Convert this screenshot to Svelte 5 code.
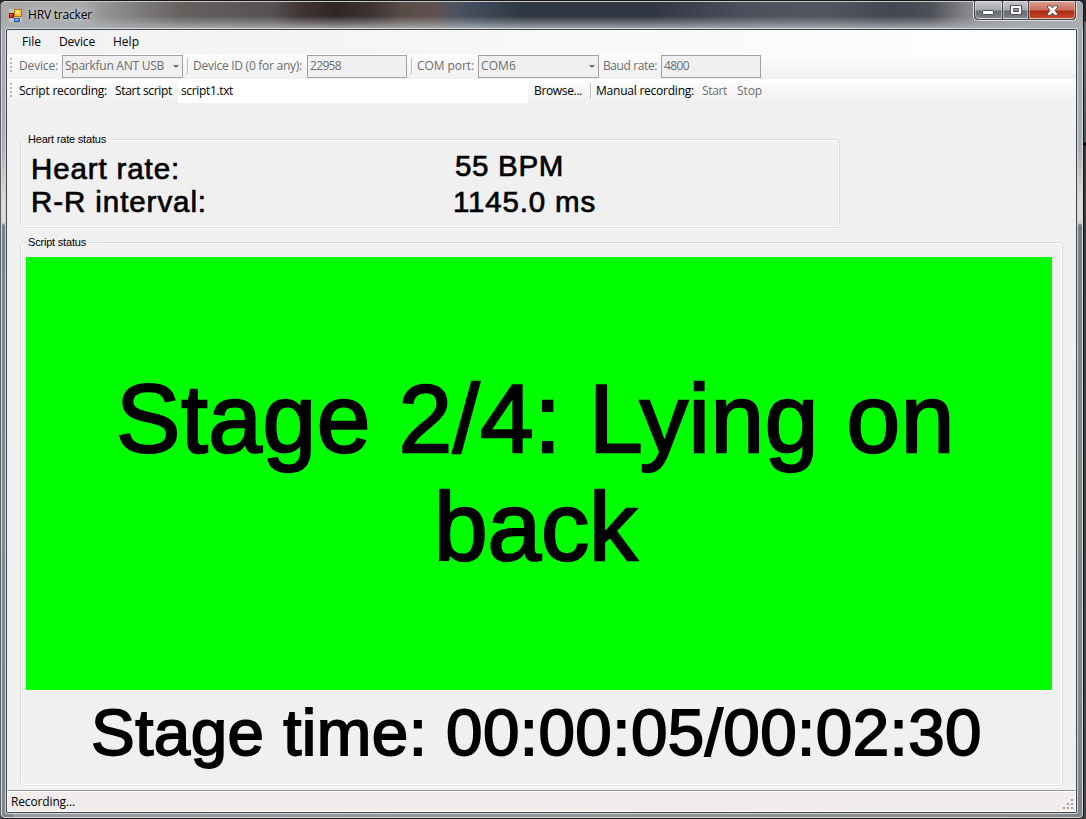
<script>
  // Tightens or loosens the tracking so that a label fills its column.
  function fit(node, width) {
    node.style.letterSpacing = '0px';
    const natural = node.getBoundingClientRect().width;
    node.style.letterSpacing = (width - natural) / node.textContent.length + 'px';
  }

  const menus = [
    { text: 'File', gap: 14, width: 19 },
    { text: 'Device', gap: 18, width: 36 },
    { text: 'Help', gap: 18, width: 26 }
  ];

  const deviceBar = [
    { kind: 'label', text: 'Device:', gap: 6, width: 39 },
    { kind: 'combo', text: 'Sparkfun ANT USB', gap: 4, width: 99, box: 121 },
    { kind: 'sep', gap: 4 },
    { kind: 'label', text: 'Device ID (0 for any):', gap: 4, width: 109 },
    { kind: 'input', text: '22958', gap: 5, width: 31, box: 100 },
    { kind: 'sep', gap: 4 },
    { kind: 'label', text: 'COM port:', gap: 4, width: 57 },
    { kind: 'combo', text: 'COM6', gap: 4, width: 35, box: 121 },
    { kind: 'label', text: 'Baud rate:', gap: 4, width: 54 },
    { kind: 'input', text: '4800', gap: 4, width: 25, box: 100 }
  ];

  const scriptBar = [
    { kind: 'label', text: 'Script recording:', gap: 6, width: 88 },
    { kind: 'label', text: 'Start script', gap: 8, width: 57 },
    { kind: 'plain', text: 'script1.txt', gap: 6, width: 52, box: 350 },
    { kind: 'label', text: 'Browse...', gap: 6, width: 48 },
    { kind: 'sep', gap: 8 },
    { kind: 'label', text: 'Manual recording:', gap: 4, width: 98 },
    { kind: 'label', text: 'Start', gap: 8, width: 25, off: true },
    { kind: 'label', text: 'Stop', gap: 10, width: 25, off: true }
  ];
</script>

{#snippet items(list)}
  <svg class="grip" width="2" height="16" viewBox="0 0 2 16">
    {#each [0, 4, 8, 12] as y}<rect x="0" {y} width="2" height="2" />{/each}
  </svg>
  {#each list as item}
    {#if item.kind === 'sep'}
      <i class="sep" style="margin-left:{item.gap}px"></i>
    {:else if item.kind === 'label'}
      <span class="cell" class:off={item.off} style="margin-left:{item.gap}px;width:{item.width}px"><span use:fit={item.width}>{item.text}</span></span>
    {:else}
      <div class="field {item.kind}" style="margin-left:{item.gap}px;width:{item.box}px">
        <span use:fit={item.width}>{item.text}</span>
        {#if item.kind === 'combo'}
          <svg width="6" height="3" viewBox="0 0 6 3"><path d="M0 0h6L3 3z" fill="#6d6d6d" /></svg>
        {/if}
      </div>
    {/if}
  {/each}
{/snippet}

<div class="desktop">
  <div class="window">
    <header class="titlebar">
      <svg class="appicon" width="13" height="13" viewBox="0 0 13 13">
        <rect width="13" height="13" fill="#d7d5cf" opacity=".55" />
        <rect x=".5" y="4.5" width="4" height="4" fill="#c92a1c" stroke="#8e1710" />
        <rect x="1.3" y="5.2" width="1.5" height="1.2" fill="#ef8c7a" />
        <rect x="5.5" y=".5" width="7" height="7" fill="#f6c231" stroke="#b07b10" />
        <rect x="6.5" y="1.5" width="4" height="3" fill="#ffe690" />
        <rect x="5.5" y="9.5" width="5" height="3" fill="#4a86e0" stroke="#2c5fb9" />
        <rect x="6.3" y="10" width="3" height="1" fill="#a2c7fa" />
      </svg>
      <span class="title" use:fit={64}>HRV tracker</span>
      <div class="controls">
        <div class="btn min">
          <svg width="12" height="5" viewBox="0 0 12 5"><rect x=".5" y=".5" width="11" height="4" rx=".5" fill="#fff" stroke="#50535f" /></svg>
        </div>
        <div class="btn max">
          <svg width="12" height="10" viewBox="0 0 12 10"><path fill-rule="evenodd" d="M.5.5h11v9H.5zM3.500 3.500v3h5v-3z" fill="#fff" stroke="#50535f" /></svg>
        </div>
        <div class="btn close">
          <svg width="13" height="11" viewBox="0 0 13 11"><path d="M1.500.8h3.300l1.700 2.200L8.200.8h3.300v1.500L9 5.500l2.500 3.200v1.500H8.200L6.500 8l-1.700 2.200H1.500V8.700L4 5.500 1.500 2.300z" fill="#fff" stroke="#50424c" stroke-width=".9" /></svg>
        </div>
      </div>
    </header>

    <main class="client">
      <nav class="menubar">
        {#each menus as menu}
          <span class="cell" style="margin-left:{menu.gap}px;width:{menu.width}px"><span use:fit={menu.width}>{menu.text}</span></span>
        {/each}
      </nav>
      <div class="toolbar disabled">{@render items(deviceBar)}</div>
      <div class="toolbar">{@render items(scriptBar)}</div>

      <section class="body">
        <fieldset class="group heart">
          <legend><span use:fit={78}>Heart rate status</span></legend>
          <div class="readings">
            <span class="cell"><span use:fit={149}>Heart rate:</span></span>
            <span class="cell value bpm"><span use:fit={109}>55 BPM</span></span>
            <span class="cell"><span use:fit={176}>R-R interval:</span></span>
            <span class="cell value"><span use:fit={143}>1145.0 ms</span></span>
          </div>
        </fieldset>

        <fieldset class="group script">
          <legend><span use:fit={58}>Script status</span></legend>
          <div class="stage">
            <div><span use:fit={839}>Stage 2/4: Lying on</span></div>
            <div><span use:fit={203}>back</span></div>
          </div>
          <div class="time"><span use:fit={891}>Stage time: 00:00:05/00:02:30</span></div>
        </fieldset>
      </section>

      <footer class="status">
        <span use:fit={64}>Recording...</span>
        <svg width="11" height="11" viewBox="0 0 11 11" fill="#a7a3a2">
          {#each [[8, 0], [4, 4], [8, 4], [0, 8], [4, 8], [8, 8]] as [x, y]}
            <rect {x} {y} width="2" height="2" />
          {/each}
        </svg>
      </footer>
    </main>
  </div>
</div>

<style>
  :global(body) { margin: 0; overflow: hidden; }
  * { box-sizing: border-box; }
  .desktop {
    width: 1086px; height: 819px; padding-right: 2px;
    background: linear-gradient(#24282f 0 21px, #62686c 22px 60px, #4c5356 142px, #000 143px 145px, #383838 146px, #454545);
    font: 12px/16px "Open Sans", "Noto Sans", sans-serif;
    color: #000;
  }
  .window {
    width: 1084px; height: 819px; padding: 0 6px 5px 5px;
    border: 1px solid #151515; border-left-color: #5d6266;
    border-radius: 6px 6px 5px 5px;
    box-shadow: inset 0 0 0 1px #d5d8da;
    background:
      linear-gradient(90deg, transparent 12px, #9a9ea2 13px, #8d8d8f 1060px, transparent 1070px) 0 100% / 100% 6px no-repeat,
      linear-gradient(#a5a8ac, #a9acb2 110px, #aeb2b6 150px, #dedede 200px, #d9dbdb 222px, #7b8286 224px, #858a8d 500px, #80868b);
  }
  .titlebar {
    display: flex; height: 28px; margin: 0 -6px 0 -5px; padding-left: 8px;
    border-radius: 5px 5px 0 0;
    border-top: 1px solid #c9cbcd;
    background:
      linear-gradient(transparent 14px, rgba(175, 178, 181, .45) 21px, rgba(175, 180, 183, .85) 26px),
      linear-gradient(90deg, #a9a9a9 0, #a9abad 80px, #929292 105px, #65615f 180px, #565252 270px, #403333 300px, #302626 335px, #3d3333 370px, #574b48 400px, #5f5250 435px, #4b5361 455px, #3e4655 485px, #303744 520px, #303642 650px, #4c4f5b 740px, #54565f 820px, #444650 890px, #4e5058 930px, #85868a 965px, #9c9ea1 1010px, #a8abad 1082px);
  }
  .appicon { margin-top: 7px; }
  .title { margin: 5px 0 0 6px; height: 16px; white-space: nowrap; text-shadow: 0 0 5px #ddd, 0 0 9px #ccc; }
  .controls {
    display: flex; width: 104px; height: 20px; margin: -1px 6px 0 auto;
    border: 1px solid #e0e2e4; border-top: 0; border-radius: 0 0 5px 5px;
    background: #42444a; padding: 0 1px 1px; gap: 1px;
  }
  .btn {
    display: flex; justify-content: center; align-items: center; width: 27px; height: 18px;
    border: 1px solid rgba(255, 255, 255, .4); border-top-color: #ddd;
    background: linear-gradient(#c5c6c9 0, #a4a5a9 8px, #696b73 9px, #85878e 18px);
  }
  .min { border-radius: 0 0 0 4px; padding-top: 5px; }
  .max { width: 26px; }
  .close {
    width: 46px; border-radius: 0 0 4px 0;
    background: linear-gradient(#d99a8b 0, #c66e5d 8px, #ad2b12 9px, #ca4f30 18px);
  }
  .client {
    display: flex; flex-direction: column; width: 1071px; height: 784px;
    border: 1px solid #42464a; outline: 1px solid #d2d4d5; background: #f0f0f0;
    border-radius: 1px;
  }
  .cell { display: block; flex: none; white-space: nowrap; }
  .menubar {
    display: flex; align-items: center; flex: none; height: 24px; padding-left: 1px;
    background: linear-gradient(90deg, #f1f1f1, #fdfdfd 90%);
  }
  .toolbar {
    display: flex; align-items: center; flex: none; height: 25px; padding: 0 0 1px 3px;
    background: linear-gradient(#fdfdfd, #f9f9f9 30%, #f0f0f0);
  }
  .toolbar .cell { margin-top: -1px; }
  .grip { fill: #b9b9b9; margin-right: 1px; }
  .disabled, .off { color: #6d6d6d; }
  .sep { width: 2px; height: 16px; border-left: 1px solid #bdbdbd; border-right: 1px solid #fff; }
  .field { display: flex; flex: none; align-items: center; height: 23px; white-space: nowrap; border: 1px solid #a0a0a0; padding: 0 3px 1px 2px; background: #f0f0f0; }
  .combo svg { margin: 1px 0 0 auto; }
  .field.plain { border: 0; background: #fff; padding: 0 3px 2px; margin-top: 1px; }
  .body { flex: 1; padding: 35px 0 0 13px; }
  .group {
    position: relative; display: block; margin: 0; padding: 0; min-width: 0;
    border: 1px solid #d5dfe5; border-radius: 3px;
    box-shadow: inset 0 0 0 1px #fff, 0 1px 0 #fff;
    font: 11px/13px "Liberation Sans", Arial, sans-serif;
  }
  .group legend {
    position: absolute; left: 6px; top: -7px; padding: 0 1px; height: 13px;
    white-space: nowrap; background: #f0f0f0;
  }
  .heart { width: 820px; height: 89px; }
  .script { width: 1043px; height: 544px; margin-top: 14px; padding: 14px 0 0 5px; }
  .readings {
    display: grid; grid-template-columns: 422px 1fr; grid-template-rows: 33px 33px;
    padding: 12px 0 0 10px; font-size: 29.500px; line-height: 34px; -webkit-text-stroke: .7px #000;
  }
  .bpm { padding-left: 2px; margin-top: -3px; }
  .stage {
    width: 1026px; height: 433px; background: #0f0; padding: 108px 0 0 0; text-align: center;
    font-size: 96.500px; line-height: 108px; white-space: nowrap; -webkit-text-stroke: 2.300px #000;
  }
  .stage div { margin-left: -7px; }
  .time {
    width: 1021px; margin-top: 7px; text-align: center; white-space: nowrap;
    font-size: 65.500px; line-height: 72px; -webkit-text-stroke: 1.800px #000;
  }
  .status {
    display: flex; flex: none; justify-content: space-between; align-items: center; height: 22px;
    margin-bottom: 0; border: 1px solid #fff; border-top: 1px solid #909090;
    box-shadow: inset 0 1px 0 #fff; background: #f1edec; padding: 1px 1px 0 3px;
  }
  .status svg { margin-top: 6px; }
</style>
